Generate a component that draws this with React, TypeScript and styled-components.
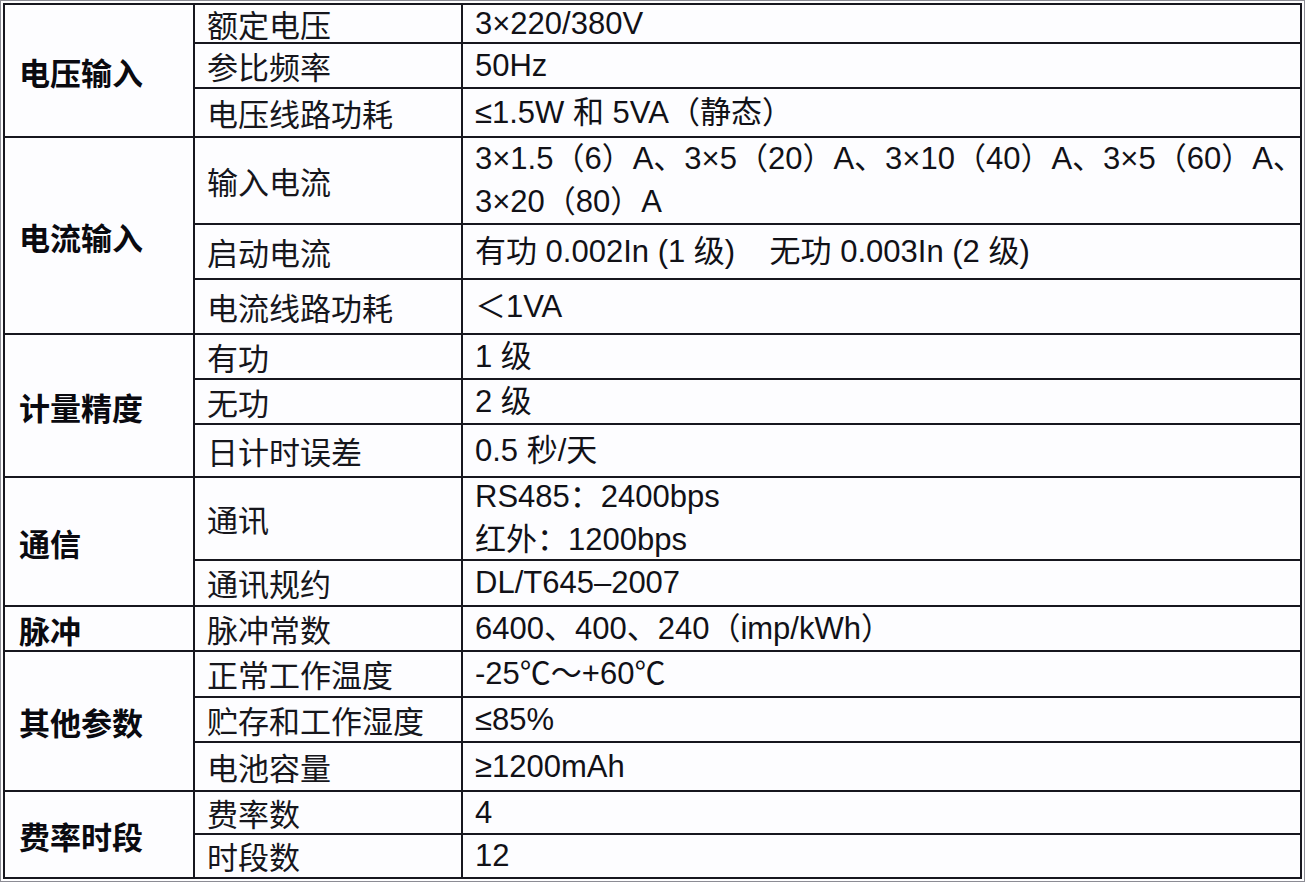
import React from 'react';
import styled, { createGlobalStyle } from 'styled-components';

const GlobalStyle = createGlobalStyle`
  *, *::before, *::after {
    box-sizing: border-box;
  }
  html, body {
    margin: 0;
    padding: 0;
    background: #ffffff;
  }
  body {
    font-family: 'Liberation Sans', 'Noto Sans CJK SC', sans-serif;
    color: #0e0e14;
  }
`;

interface SpecRow {
  name: string;
  value: string[];
  height: number;
}

interface SpecGroup {
  label: string;
  rows: SpecRow[];
}

const NB = '\u00a0';

// 행 높이는 원본 표의 줄 간격 그대로
const groups: SpecGroup[] = [
  {
    label: '电压输入',
    rows: [
      { name: '额定电压', value: ['3×220/380V'], height: 39 },
      { name: '参比频率', value: ['50Hz'], height: 45 },
      { name: '电压线路功耗', value: ['≤1.5W 和 5VA（静态）'], height: 49 },
    ],
  },
  {
    label: '电流输入',
    rows: [
      {
        name: '输入电流',
        value: ['3×1.5（6）A、3×5（20）A、3×10（40）A、3×5（60）A、', '3×20（80）A'],
        height: 87,
      },
      {
        name: '启动电流',
        value: [`有功 0.002In (1 级)${NB.repeat(4)}无功 0.003In (2 级)`],
        height: 55,
      },
      { name: '电流线路功耗', value: ['＜1VA'], height: 55 },
    ],
  },
  {
    label: '计量精度',
    rows: [
      { name: '有功', value: ['1 级'], height: 45 },
      { name: '无功', value: ['2 级'], height: 45 },
      { name: '日计时误差', value: ['0.5 秒/天'], height: 53 },
    ],
  },
  {
    label: '通信',
    rows: [
      { name: '通讯', value: ['RS485：2400bps', '红外：1200bps'], height: 83 },
      { name: '通讯规约', value: ['DL/T645–2007'], height: 46 },
    ],
  },
  {
    label: '脉冲',
    rows: [{ name: '脉冲常数', value: ['6400、400、240（imp/kWh）'], height: 45 }],
  },
  {
    label: '其他参数',
    rows: [
      { name: '正常工作温度', value: ['-25℃～+60℃'], height: 46 },
      { name: '贮存和工作湿度', value: ['≤85%'], height: 45 },
      { name: '电池容量', value: ['≥1200mAh'], height: 49 },
    ],
  },
  {
    label: '费率时段',
    rows: [
      { name: '费率数', value: ['4'], height: 43 },
      { name: '时段数', value: ['12'], height: 44 },
    ],
  },
];

export default function App() {
  return (
    <>
      <GlobalStyle />
      <Frame>
        <SpecTable>
          <colgroup>
            <Col $w={190} />
            <Col $w={268} />
            <Col $w={839} />
          </colgroup>
          <tbody>
            {groups.map((group) =>
              group.rows.map((row, i) => (
                <Row key={group.label + row.name} $h={row.height}>
                  {i === 0 && <GroupCell rowSpan={group.rows.length}>{group.label}</GroupCell>}
                  <NameCell>{row.name}</NameCell>
                  <ValueCell>
                    <ValueStack>
                      {row.value.map((line, j) => (
                        <span key={j}>{line}</span>
                      ))}
                    </ValueStack>
                  </ValueCell>
                </Row>
              )),
            )}
          </tbody>
        </SpecTable>
      </Frame>
    </>
  );
}

const Frame = styled.div`
  display: inline-block;
  border: 1px solid #8c8c94;
  padding: 2px;
  background: #fdfdfe;
`;

const SpecTable = styled.table`
  width: 1299px;
  table-layout: fixed;
  border-collapse: separate;
  border-spacing: 0;
  border-top: 2px solid #17171f;
  border-left: 2px solid #17171f;
  background: #fdfdff;
`;

const Col = styled.col<{ $w: number }>`
  width: ${(p) => p.$w}px;
`;

const Row = styled.tr<{ $h: number }>`
  height: ${(p) => p.$h}px;
`;

const Cell = styled.td`
  border-right: 2px solid #17171f;
  border-bottom: 2px solid #17171f;
  padding: 0 0 0 12px;
  vertical-align: middle;
  line-height: 34px;
  white-space: nowrap;
`;

const GroupCell = styled(Cell)`
  padding-left: 14px;
  padding-top: 2px;
  font-family: 'Noto Sans CJK SC', sans-serif;
  font-size: 31px;
  font-weight: 700;
  color: #0a0a10;
`;

const NameCell = styled(Cell)`
  font-family: 'Noto Sans CJK SC', sans-serif;
  font-size: 31px;
  font-weight: 400;
  color: #16161c;
`;

const ValueCell = styled(Cell)`
  padding-left: 12px;
  font-family: 'Liberation Sans', 'Noto Sans CJK SC', sans-serif;
  font-size: 31px;
  color: #111117;
`;

const ValueStack = styled.div`
  display: flex;
  flex-direction: column;
  gap: 9px;
  line-height: 34px;
`;
